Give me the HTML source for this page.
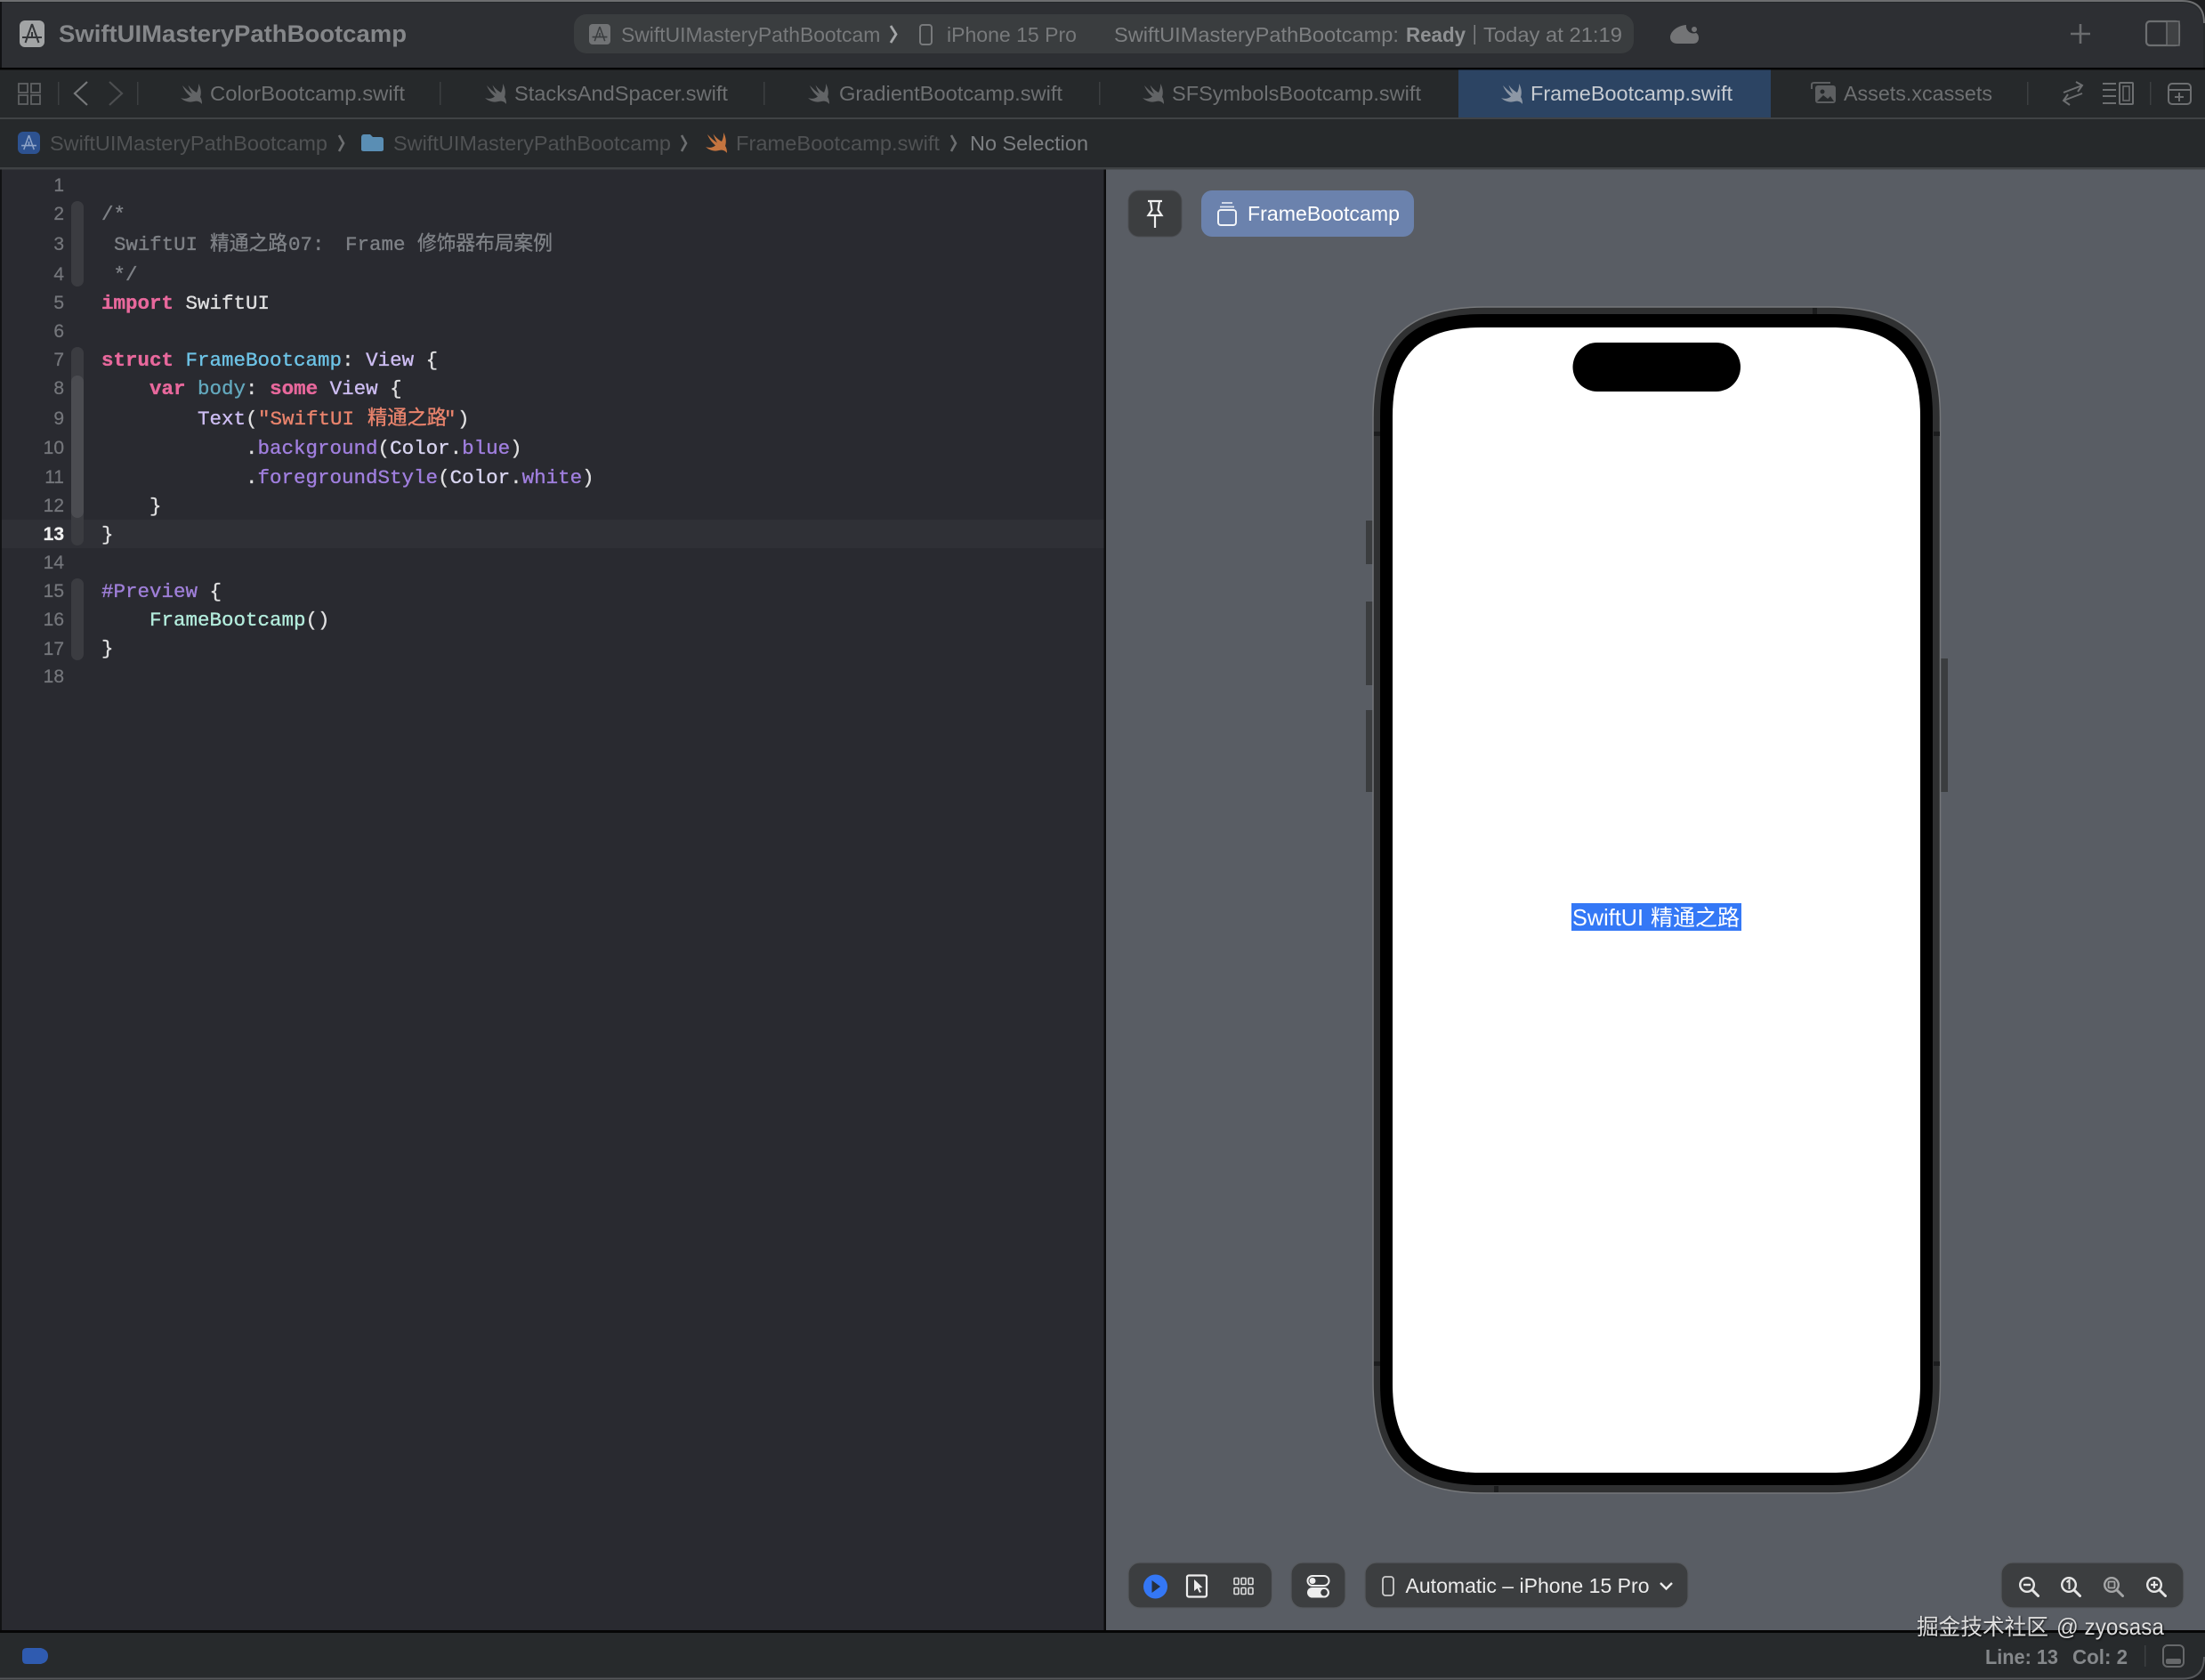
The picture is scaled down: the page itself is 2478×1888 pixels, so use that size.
<!DOCTYPE html>
<html lang="en"><head><meta charset="utf-8"><title>Xcode</title>
<style>
html,body{margin:0;padding:0;background:#1d1e20;width:2478px;height:1888px;overflow:hidden}
svg{display:block}
text{white-space:pre}
.s{font-family:"Liberation Sans","Noto Sans CJK SC",sans-serif;font-size:23px}
.c{font-family:"Liberation Mono","Noto Sans CJK SC",monospace;font-size:22.5px;fill:#dfdfe0;stroke:#dfdfe0;stroke-width:.35px}
.n{font-family:"Liberation Sans",sans-serif;font-size:21px;fill:#74767b;stroke:#74767b;stroke-width:.25px;text-anchor:end}
.k{fill:#e8689c;stroke:#e8689c;font-weight:bold}
.t{fill:#cdbdf2;stroke:#cdbdf2}
.d{fill:#6dc3e6;stroke:#6dc3e6}
.v{fill:#63a8bd;stroke:#63a8bd}
.m{fill:#a07fde;stroke:#a07fde}
.q{fill:#e8836c;stroke:#e8836c}
.g{fill:#7e8186;stroke:#7e8186}
.l{fill:#d8d4f0;stroke:#d8d4f0}
.tab{fill:#6e7072}
.jb{fill:#505254}
</style></head><body>
<svg xmlns="http://www.w3.org/2000/svg" width="2478" height="1888" viewBox="0 0 2478 1888">
<defs>
<symbol id="bird" viewBox="0 0 24 24"><path d="M20 0C23 5 23.500 11 22 15C23.500 17 24 20 24 23C22 20.500 19 19 15 20C10 21.500 4 20 0 16C4 17.500 8 17 11 14.500C7 11 4 7 2 2C6 6 9 9 13 11.500C11 8 9.500 5 8.500 1.500C11 5 15 8.500 18 10C19.500 7 20.500 3 20 0Z"/></symbol>
<symbol id="app" viewBox="0 0 28 30"><path d="M14 4L6.500 25M14 4L21.500 25M3 19H25M14 19L14 13" fill="none" stroke-width="2"/></symbol>
<symbol id="mag" viewBox="0 0 24 24"><circle cx="10" cy="10" r="7.800" fill="none" stroke="#e6e6e6" stroke-width="2.400"/><path d="M16 16L22.500 22.500" stroke="#e6e6e6" stroke-width="3" stroke-linecap="round"/></symbol>
<clipPath id="fade"><rect x="690" y="16" width="300" height="44"/></clipPath>
</defs>

<!-- window body -->
<path d="M0 0H2452Q2478 0 2478 26V1862Q2478 1888 2452 1888H0Z" fill="#26292b"/>
<path d="M0 1H2452Q2477 1 2477 26" fill="none" stroke="#6d6e70" stroke-width="2"/>
<rect x="0" y="2" width="2" height="1884" fill="#111214"/>

<!-- toolbar -->
<path d="M2 3H2450Q2476 3 2476 28V76H2Z" fill="#2d2f33"/>
<rect x="0" y="76" width="2478" height="2.500" fill="#050505"/>
<rect x="22" y="23" width="28" height="30" rx="6" fill="#a2a4a5"/>
<use href="#app" x="22" y="23" width="28" height="30" stroke="#333538"/>
<text x="66" y="47" class="s" font-weight="bold" style="font-size:27px" fill="#85878a" textLength="391" lengthAdjust="spacingAndGlyphs">SwiftUIMasteryPathBootcamp</text>

<rect x="645" y="16" width="1191" height="44" rx="14" fill="#3a3d3f"/>
<rect x="662" y="27" width="24" height="23" rx="4" fill="#717375"/>
<use href="#app" x="663" y="27" width="22" height="23" stroke="#3a3d3f"/>
<text x="698" y="47" class="s" fill="#77797b" clip-path="url(#fade)" textLength="304" lengthAdjust="spacingAndGlyphs">SwiftUIMasteryPathBootcamp</text>
<path d="M1001 29L1007 38.500L1001 48" fill="none" stroke="#a5a7a9" stroke-width="2.800"/>
<rect x="1034" y="28" width="13" height="22" rx="3" fill="none" stroke="#77797b" stroke-width="2"/>
<text x="1064" y="47" class="s" fill="#77797b" textLength="146" lengthAdjust="spacingAndGlyphs">iPhone 15 Pro</text>
<text x="1252" y="47" class="s" fill="#7d7f81" textLength="320" lengthAdjust="spacingAndGlyphs">SwiftUIMasteryPathBootcamp:</text>
<text x="1580" y="47" class="s" fill="#8f9193" font-weight="bold" textLength="67" lengthAdjust="spacingAndGlyphs">Ready</text>
<rect x="1656.500" y="28" width="1.500" height="22" fill="#7d7f81"/>
<text x="1667" y="47" class="s" fill="#7d7f81" textLength="156" lengthAdjust="spacingAndGlyphs">Today at 21:19</text>
<path d="M1895 28C1884 29 1877 36 1877 42C1877 47 1881 49 1885 49H1903C1907 49 1909 46 1909 43C1909 40 1908 38 1906 37C1900 39 1894 34 1895 28Z" fill="#737476"/>
<circle cx="1904" cy="33" r="3" fill="#737476"/>
<path d="M2338 27V49M2327 38H2349" stroke="#6a6c6e" stroke-width="2.600" fill="none"/>
<rect x="2412" y="24" width="37" height="27" rx="4" fill="none" stroke="#6d6f71" stroke-width="2.200"/>
<rect x="2435" y="24" width="14" height="27" fill="#3f4143" stroke="#6d6f71" stroke-width="1.500"/>

<!-- tab bar -->
<rect x="0" y="78.500" width="2478" height="53.500" fill="#26292b"/>
<rect x="1639" y="78.500" width="351" height="53.500" fill="#2c4463"/>
<rect x="0" y="132" width="2478" height="2" fill="#404345"/>
<g fill="none" stroke="#5f6163" stroke-width="1.800">
<rect x="21" y="94" width="10" height="10"/><rect x="35" y="94" width="10" height="10" /><rect x="21" y="107" width="10" height="10"/><rect x="35" y="107" width="10" height="10"/>
</g>
<g fill="#3c3f41">
<rect x="65" y="92" width="1.500" height="26"/><rect x="154" y="92" width="1.500" height="26"/><rect x="494" y="92" width="1.500" height="26"/><rect x="858" y="92" width="1.500" height="26"/><rect x="1235" y="92" width="1.500" height="26"/><rect x="2278" y="92" width="1.500" height="26"/><rect x="2416" y="92" width="1.500" height="26"/>
</g>
<path d="M98 92L84 105L98 118" fill="none" stroke="#77797b" stroke-width="2.200"/>
<path d="M123 92L137 105L123 118" fill="none" stroke="#4c4e50" stroke-width="2.200"/>
<g fill="#626466">
<use href="#bird" x="203" y="94" width="24" height="24"/>
<use href="#bird" x="545" y="94" width="24" height="24"/>
<use href="#bird" x="908" y="94" width="24" height="24"/>
<use href="#bird" x="1284" y="94" width="24" height="24"/>
</g>
<use href="#bird" x="1687" y="94" width="24" height="24" fill="#8d97a5"/>
<text x="236" y="113" class="s tab" textLength="219" lengthAdjust="spacingAndGlyphs">ColorBootcamp.swift</text>
<text x="578" y="113" class="s tab" textLength="240" lengthAdjust="spacingAndGlyphs">StacksAndSpacer.swift</text>
<text x="943" y="113" class="s tab" textLength="251" lengthAdjust="spacingAndGlyphs">GradientBootcamp.swift</text>
<text x="1317" y="113" class="s tab" textLength="280" lengthAdjust="spacingAndGlyphs">SFSymbolsBootcamp.swift</text>
<text x="1720" y="113" class="s" fill="#c6cbd2" textLength="227" lengthAdjust="spacingAndGlyphs">FrameBootcamp.swift</text>
<rect x="2040" y="96" width="23" height="20" rx="3" fill="#5d5f61"/>
<path d="M2036 100V95Q2036 93 2039 93L2057 93" fill="none" stroke="#5d5f61" stroke-width="2"/>
<circle cx="2048" cy="103" r="2.500" fill="#26292b"/><path d="M2042 114L2049 107L2054 111L2057 108L2061 114Z" fill="#26292b"/>
<text x="2072" y="113" class="s tab" textLength="167" lengthAdjust="spacingAndGlyphs">Assets.xcassets</text>
<path d="M2340 96L2319 104M2333 92L2340 96L2335 103M2319 113L2340 105M2326 118L2319 113L2324 106" fill="none" stroke="#6d6f71" stroke-width="2"/>
<path d="M2363 94H2378M2363 101H2378M2363 108H2378M2363 116H2378" stroke="#6d6f71" stroke-width="2"/>
<rect x="2382" y="93" width="15" height="24" rx="1" fill="none" stroke="#6d6f71" stroke-width="2"/><rect x="2386" y="97" width="7" height="16" fill="none" stroke="#6d6f71" stroke-width="1.500"/>
<rect x="2437" y="94" width="25" height="23" rx="4" fill="none" stroke="#6d6f71" stroke-width="2"/><path d="M2437 101H2462M2449 104V114M2444 109H2454" stroke="#6d6f71" stroke-width="2" fill="none"/>

<!-- jump bar -->
<rect x="0" y="134" width="2478" height="54" fill="#26292b"/>
<rect x="0" y="188" width="2478" height="2.500" fill="#3f4244"/>
<rect x="20" y="148" width="25" height="25" rx="6" fill="#2d5290"/>
<use href="#app" x="21" y="149" width="23" height="23" stroke="#8fa5c8"/>
<text x="56" y="169" class="s jb" textLength="312" lengthAdjust="spacingAndGlyphs">SwiftUIMasteryPathBootcamp</text>
<path d="M381 152L386 161L381 170" fill="none" stroke="#6d6f71" stroke-width="2.600"/>
<path d="M406 155Q406 151 409 151H416L419 154H428Q431 154 431 157V168Q431 170 428 170H409Q406 170 406 168Z" fill="#5a8eb4"/>
<text x="442" y="169" class="s jb" textLength="312" lengthAdjust="spacingAndGlyphs">SwiftUIMasteryPathBootcamp</text>
<path d="M766 152L771 161L766 170" fill="none" stroke="#6d6f71" stroke-width="2.600"/>
<use href="#bird" x="793" y="149" width="24" height="24" fill="#c4743f"/>
<text x="827" y="169" class="s jb" textLength="229" lengthAdjust="spacingAndGlyphs">FrameBootcamp.swift</text>
<path d="M1069 152L1074 161L1069 170" fill="none" stroke="#6d6f71" stroke-width="2.600"/>
<text x="1090" y="169" class="s" fill="#7c7f82" textLength="133" lengthAdjust="spacingAndGlyphs">No Selection</text>

<!-- editor -->
<rect x="2" y="190.500" width="1240" height="1641.500" fill="#292a30"/>
<rect x="2" y="584" width="1240" height="32" fill="#2f3036"/>
<rect x="80" y="226" width="14" height="96" rx="7" fill="#3b3c41"/>
<rect x="80" y="390" width="14" height="223" rx="7" fill="#3b3c41"/>
<rect x="80" y="422" width="14" height="160" rx="7" fill="#4b4c51"/>
<rect x="80" y="650" width="14" height="92" rx="7" fill="#3b3c41"/>
<text x="72" y="215" class="n">1</text>
<text x="72" y="247" class="n">2</text>
<text x="72" y="281" class="n">3</text>
<text x="72" y="315" class="n">4</text>
<text x="72" y="347" class="n">5</text>
<text x="72" y="379" class="n">6</text>
<text x="72" y="411" class="n">7</text>
<text x="72" y="443" class="n">8</text>
<text x="72" y="477" class="n">9</text>
<text x="72" y="510" class="n">10</text>
<text x="72" y="543" class="n">11</text>
<text x="72" y="575" class="n">12</text>
<text x="72" y="607" class="n" style="fill:#f0f0f0;stroke:#f0f0f0;font-weight:bold">13</text>
<text x="72" y="639" class="n">14</text>
<text x="72" y="671" class="n">15</text>
<text x="72" y="703" class="n">16</text>
<text x="72" y="736" class="n">17</text>
<text x="72" y="767" class="n">18</text>

<text x="114" y="247" class="c g">/*</text>
<text x="128" y="281" class="c g" textLength="94" lengthAdjust="spacingAndGlyphs">SwiftUI</text>
<text x="236" y="281" class="c g" textLength="87" lengthAdjust="spacingAndGlyphs">精通之路</text>
<text x="324" y="281" class="c g">07:</text>
<text x="388" y="281" class="c g">Frame</text>
<text x="469" y="281" class="c g" textLength="152" lengthAdjust="spacingAndGlyphs">修饰器布局案例</text>
<text x="127.500" y="315" class="c g">*/</text>
<text x="114" y="347" class="c"><tspan class="k">import</tspan> SwiftUI</text>
<text x="114" y="411" class="c"><tspan class="k">struct</tspan> <tspan class="d">FrameBootcamp</tspan>: <tspan class="t">View</tspan> {</text>
<text x="168" y="443" class="c"><tspan class="k">var</tspan> <tspan class="v">body</tspan>: <tspan class="k">some</tspan> <tspan class="t">View</tspan> {</text>
<text x="222" y="477" class="c"><tspan class="t">Text</tspan>(</text>
<text x="290" y="477" class="c q">"SwiftUI</text>
<text x="413" y="477" class="c q" textLength="89" lengthAdjust="spacingAndGlyphs">精通之路</text>
<text x="499" y="477" class="c q">"</text>
<text x="514" y="477" class="c">)</text>
<text x="276" y="510" class="c">.<tspan class="m">background</tspan>(<tspan class="l">Color</tspan>.<tspan class="m">blue</tspan>)</text>
<text x="276" y="543" class="c">.<tspan class="m">foregroundStyle</tspan>(<tspan class="l">Color</tspan>.<tspan class="m">white</tspan>)</text>
<text x="168" y="575" class="c">}</text>
<text x="114" y="607" class="c">}</text>
<text x="114" y="671" class="c"><tspan style="fill:#9f7fd8;stroke:#9f7fd8">#Preview</tspan> {</text>
<text x="168" y="703" class="c"><tspan style="fill:#b3ecdc;stroke:#b3ecdc">FrameBootcamp</tspan>()</text>
<text x="114" y="735" class="c">}</text>

<!-- preview -->
<rect x="1240.500" y="190.500" width="2.500" height="1641.500" fill="#0c0c0d"/>
<rect x="1243" y="190.500" width="1235" height="1641.500" fill="#595d64"/>

<rect x="1268" y="214" width="60" height="52" rx="12" fill="#3c3e40" stroke="#4c4e52" stroke-width="1"/>
<path d="M1290 226H1306M1293 226L1294.500 236L1290.500 242H1305.500L1301.500 236L1303 226M1298 242V256" fill="none" stroke="#f0f0f0" stroke-width="2.200"/>
<rect x="1350" y="214" width="239" height="52" rx="12" fill="#6b82ad"/>
<path d="M1373 228H1385M1371 232.500H1387" stroke="#dfe5ef" stroke-width="1.800"/>
<rect x="1369" y="236" width="20" height="17" rx="3" fill="none" stroke="#f2f4f8" stroke-width="2"/>
<text x="1402" y="248" class="s" fill="#ffffff" textLength="171" lengthAdjust="spacingAndGlyphs">FrameBootcamp</text>

<!-- phone -->
<rect x="1535" y="585" width="10" height="49" fill="#3b3d3f"/>
<rect x="1535" y="676" width="10" height="94" fill="#3b3d3f"/>
<rect x="1535" y="798" width="10" height="92" fill="#3b3d3f"/>
<rect x="2179" y="740" width="10" height="150" fill="#3b3d3f"/>
<path d="M1543 470C1543 382.500 1580.500 345 1668 345H2055.500C2143 345 2180.500 382.500 2180.500 470V1553C2180.500 1640.500 2143 1678 2055.500 1678H1668C1580.500 1678 1543 1640.500 1543 1553Z" fill="#2f3031" stroke="#75777a" stroke-width="1.500"/>
<path d="M1551 468C1551 387.500 1585.500 353 1666 353H2057C2137.500 353 2172 387.500 2172 468V1554C2172 1634.500 2137.500 1669 2057 1669H1666C1585.500 1669 1551 1634.500 1551 1554Z" fill="#000"/>
<path d="M1565 468C1565 398 1595 368 1665 368H2058C2128 368 2158 398 2158 468V1555C2158 1625 2128 1655 2058 1655H1665C1595 1655 1565 1625 1565 1555Z" fill="#fff"/>
<g fill="#1c1d1e">
<rect x="1544" y="485" width="7" height="5"/><rect x="2173" y="485" width="7" height="5"/>
<rect x="1544" y="1530" width="7" height="5"/><rect x="2173" y="1530" width="7" height="5"/>
<rect x="1679" y="1670" width="5" height="7"/><rect x="2037" y="346" width="5" height="7"/>
</g>
<rect x="1767.500" y="385" width="188.500" height="55" rx="27.500" fill="#000"/>
<rect x="1766" y="1015" width="191" height="31" fill="#3478f6"/>
<text x="1767" y="1040" class="s" style="font-size:26px" fill="#fff" textLength="80" lengthAdjust="spacingAndGlyphs">SwiftUI</text>
<text x="1855" y="1040" class="s" style="font-size:25px" fill="#fff" textLength="100" lengthAdjust="spacingAndGlyphs">精通之路</text>

<!-- preview bottom controls -->
<g fill="#3c3e40" stroke="#56595d" stroke-width="1.200">
<rect x="1268" y="1756" width="161.500" height="51" rx="13"/>
<rect x="1451" y="1756" width="61" height="51" rx="13"/>
<rect x="1534" y="1756" width="363" height="51" rx="13"/>
<rect x="2249" y="1756" width="205" height="51" rx="13"/>
</g>
<circle cx="1298.500" cy="1783" r="13.500" fill="#3477f5"/>
<path d="M1294.500 1776L1304 1783L1294.500 1790Z" fill="#26303f"/>
<rect x="1334" y="1770.500" width="22" height="24" rx="2" fill="none" stroke="#eeeeee" stroke-width="2.200"/>
<path d="M1342 1775L1342 1788L1345.500 1785L1348 1790L1350 1789L1347.500 1784.500L1351.500 1784Z" fill="#eeeeee"/>
<g fill="none" stroke="#dddddd" stroke-width="1.600">
<rect x="1387" y="1773.500" width="5" height="7" rx="1"/><rect x="1395" y="1773.500" width="5" height="7" rx="1"/><rect x="1403" y="1773.500" width="5" height="7" rx="1"/>
<rect x="1387" y="1784.500" width="5" height="7" rx="1"/><rect x="1395" y="1784.500" width="5" height="7" rx="1"/><rect x="1403" y="1784.500" width="5" height="7" rx="1"/>
</g>
<rect x="1469.500" y="1771" width="24" height="11" rx="5.500" fill="none" stroke="#eeeeee" stroke-width="2"/>
<circle cx="1475" cy="1776.500" r="3.500" fill="#eeeeee"/>
<rect x="1469" y="1784" width="25" height="11.500" rx="5.750" fill="#eeeeee"/>
<circle cx="1488" cy="1789.700" r="3.800" fill="#3c3e40"/>
<rect x="1554" y="1772" width="12" height="21" rx="3" fill="none" stroke="#cccccc" stroke-width="1.800"/>
<text x="1579.500" y="1790" class="s" fill="#ececec" textLength="274" lengthAdjust="spacingAndGlyphs">Automatic – iPhone 15 Pro</text>
<path d="M1866 1779L1872.500 1785.500L1879 1779" fill="none" stroke="#ececec" stroke-width="2.400"/>
<use href="#mag" x="2268" y="1771" width="24" height="24"/>
<path d="M2274 1781H2282" stroke="#e6e6e6" stroke-width="2.400"/>
<use href="#mag" x="2315" y="1771" width="24" height="24"/>
<path d="M2322.500 1778L2325.500 1776V1786" stroke="#e6e6e6" stroke-width="2" fill="none"/>
<g opacity=".62"><use href="#mag" x="2363" y="1771" width="24" height="24"/>
<rect x="2369.500" y="1777.500" width="7" height="7" rx="1" fill="none" stroke="#e6e6e6" stroke-width="1.800"/></g>
<use href="#mag" x="2411" y="1771" width="24" height="24"/>
<path d="M2417 1781H2425M2421 1777V1785" stroke="#e6e6e6" stroke-width="2.200"/>

<!-- status bar -->
<rect x="0" y="1832" width="2478" height="3" fill="#060606"/>
<path d="M0 1835H2478V1862Q2478 1886 2454 1886H0Z" fill="#272a2c"/>
<path d="M0 1886.500H2454Q2477 1886 2477 1862" fill="none" stroke="#55575a" stroke-width="2"/>
<path d="M30 1852H46Q54 1854 54 1861Q54 1868 46 1870H30Q25 1870 25 1865V1857Q25 1852 30 1852Z" fill="#2f5bb0"/>
<text x="2231" y="1870" class="s" fill="#85888b" font-weight="bold" textLength="82" lengthAdjust="spacingAndGlyphs">Line: 13</text>
<text x="2329" y="1870" class="s" fill="#85888b" font-weight="bold" textLength="62" lengthAdjust="spacingAndGlyphs">Col: 2</text>
<rect x="2410" y="1849" width="1.500" height="24" fill="#3d4042"/>
<rect x="2431" y="1849" width="23" height="24" rx="5" fill="none" stroke="#66686a" stroke-width="2"/>
<rect x="2434" y="1864" width="17" height="6" rx="2" fill="#66686a"/>

<!-- watermark -->
<g style="filter:drop-shadow(1px 1px 1px rgba(0,0,0,.75))">
<text x="2154" y="1837" class="s" style="font-size:25px" fill="#dedede" textLength="148" lengthAdjust="spacingAndGlyphs">掘金技术社区</text>
<text x="2311" y="1837" class="s" style="font-size:26px" fill="#dedede" textLength="121" lengthAdjust="spacingAndGlyphs">@ zyosasa</text>
</g>
</svg>
</body></html>
